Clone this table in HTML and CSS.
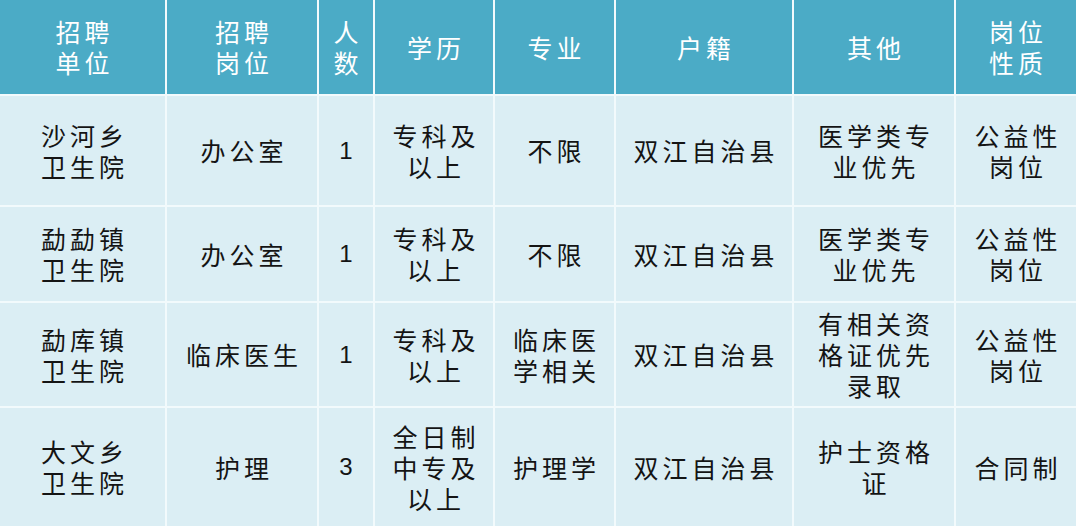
FILE: index.html
```html
<!DOCTYPE html>
<html lang="zh-CN">
<head>
<meta charset="utf-8">
<title>招聘岗位</title>
<link rel="stylesheet" href="styles.css">
</head>
<body>
<div class="table">
  <div class="cell head"><div class="lines"><span>招聘</span><span>单位</span></div></div>
  <div class="cell head"><div class="lines"><span>招聘</span><span>岗位</span></div></div>
  <div class="cell head"><div class="lines"><span>人</span><span>数</span></div></div>
  <div class="cell head"><div class="lines"><span>学历</span></div></div>
  <div class="cell head"><div class="lines"><span>专业</span></div></div>
  <div class="cell head"><div class="lines"><span>户籍</span></div></div>
  <div class="cell head"><div class="lines"><span>其他</span></div></div>
  <div class="cell head"><div class="lines"><span>岗位</span><span>性质</span></div></div>

  <div class="cell"><div class="lines"><span>沙河乡</span><span>卫生院</span></div></div>
  <div class="cell"><div class="lines"><span>办公室</span></div></div>
  <div class="cell num">1</div>
  <div class="cell"><div class="lines"><span>专科及</span><span>以上</span></div></div>
  <div class="cell"><div class="lines"><span>不限</span></div></div>
  <div class="cell"><div class="lines"><span>双江自治县</span></div></div>
  <div class="cell"><div class="lines"><span>医学类专</span><span>业优先</span></div></div>
  <div class="cell"><div class="lines"><span>公益性</span><span>岗位</span></div></div>

  <div class="cell"><div class="lines"><span>勐勐镇</span><span>卫生院</span></div></div>
  <div class="cell"><div class="lines"><span>办公室</span></div></div>
  <div class="cell num">1</div>
  <div class="cell"><div class="lines"><span>专科及</span><span>以上</span></div></div>
  <div class="cell"><div class="lines"><span>不限</span></div></div>
  <div class="cell"><div class="lines"><span>双江自治县</span></div></div>
  <div class="cell"><div class="lines"><span>医学类专</span><span>业优先</span></div></div>
  <div class="cell"><div class="lines"><span>公益性</span><span>岗位</span></div></div>

  <div class="cell"><div class="lines"><span>勐库镇</span><span>卫生院</span></div></div>
  <div class="cell"><div class="lines"><span>临床医生</span></div></div>
  <div class="cell num">1</div>
  <div class="cell"><div class="lines"><span>专科及</span><span>以上</span></div></div>
  <div class="cell"><div class="lines"><span>临床医</span><span>学相关</span></div></div>
  <div class="cell"><div class="lines"><span>双江自治县</span></div></div>
  <div class="cell"><div class="lines"><span>有相关资</span><span>格证优先</span><span>录取</span></div></div>
  <div class="cell"><div class="lines"><span>公益性</span><span>岗位</span></div></div>

  <div class="cell"><div class="lines"><span>大文乡</span><span>卫生院</span></div></div>
  <div class="cell"><div class="lines"><span>护理</span></div></div>
  <div class="cell num">3</div>
  <div class="cell"><div class="lines"><span>全日制</span><span>中专及</span><span>以上</span></div></div>
  <div class="cell"><div class="lines"><span>护理学</span></div></div>
  <div class="cell"><div class="lines"><span>双江自治县</span></div></div>
  <div class="cell"><div class="lines"><span>护士资格</span><span>证</span></div></div>
  <div class="cell"><div class="lines"><span>合同制</span></div></div>
</div>
</body>
</html>
```

FILE: styles.css
```css
html, body {
  margin: 0;
  padding: 0;
  background: #ffffff;
}

body {
  width: 1080px;
  height: 528px;
  overflow: hidden;
  font-family: "Noto Sans CJK SC", "Noto Sans", sans-serif;
}

.table {
  width: 1076px;
  height: 526px;
  display: grid;
  grid-template-columns: 165px 150px 54px 118px 119px 176px 160px 120px;
  grid-template-rows: 94px 109px 94px 103px 118px;
  gap: 2px;
  background: #f2fafc;
}

.cell {
  display: flex;
  align-items: center;
  justify-content: center;
  text-align: center;
  background: #dbeef4;
  color: #141414;
  font-size: 25px;
}

.lines {
  display: flex;
  flex-direction: column;
  align-items: center;
}

.lines span {
  display: block;
  height: 31px;
  line-height: 31px;
  letter-spacing: 4px;
  padding-left: 4px;
  white-space: nowrap;
}

.head {
  background: #4babc6;
  color: #ffffff;
}

.num {
  font-family: "Liberation Sans", Arial, sans-serif;
  font-size: 24px;
}
```
